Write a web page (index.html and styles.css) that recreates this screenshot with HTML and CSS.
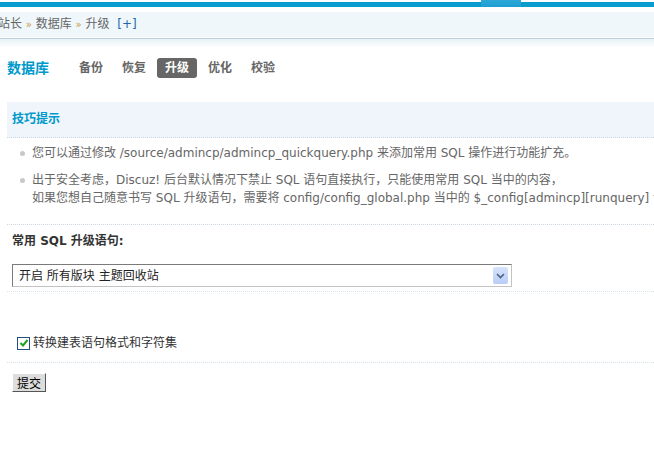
FILE: index.html
```html
<!DOCTYPE html>
<html lang="zh-CN">

<head>
    <meta charset="UTF-8">
    <title>数据库 - 升级</title>
    <link rel="stylesheet" href="styles.css">
</head>

<body>

    <div class="topbar">
        <span class="topbar-tab"></span>
    </div>

    <div class="crumbs">
        站长 <em>&raquo;</em> 数据库 <em>&raquo;</em> 升级 <a href="#" class="crumb-add">[+]</a>
    </div>
    <div class="crumbs-shadow"></div>

    <div class="main">
        <div class="itemtitle">
            <h3>数据库</h3>
            <ul class="tabs">
                <li><a href="#">备份</a></li>
                <li><a href="#">恢复</a></li>
                <li class="current"><a href="#">升级</a></li>
                <li><a href="#">优化</a></li>
                <li><a href="#">校验</a></li>
            </ul>
        </div>

        <div class="tips">
            <div class="tips-head">技巧提示</div>
            <ul class="tips-list">
                <li>您可以通过修改 /source/admincp/admincp_quickquery.php 来添加常用 SQL 操作进行功能扩充。</li>
                <li>出于安全考虑，Discuz! 后台默认情况下禁止 SQL 语句直接执行，只能使用常用 SQL 当中的内容，<br>如果您想自己随意书写 SQL 升级语句，需要将 config/config_global.php 当中的 $_config[admincp][runquery] 设置修改为 1。</li>
            </ul>
        </div>

        <form class="form">
            <div class="row row-label">常用 SQL 升级语句:</div>
            <div class="row row-select">
                <div class="select">
                    <span>开启 所有版块 主题回收站</span>
                    <span class="select-arrow">
                        <svg width="9" height="6" viewBox="0 0 9 6">
                            <path d="M1 1 L4.5 4.5 L8 1" fill="none" stroke="#4d6185" stroke-width="1.6"/>
                        </svg>
                    </span>
                </div>
            </div>
            <div class="row row-check">
                <label class="check">
                    <span class="box">
                        <svg width="10" height="10" viewBox="0 0 10 10">
                            <path d="M1.5 5 L4 7.5 L8.5 2" fill="none" stroke="#21a121" stroke-width="2"/>
                        </svg>
                    </span>
                    转换建表语句格式和字符集
                </label>
            </div>
            <div class="row row-submit">
                <button type="button" class="btn">提交</button>
            </div>
        </form>
    </div>

</body>

</html>
```

FILE: styles.css
```css
body {
    margin: 0;
    background: #fff;
    color: #666;
    font: 12px/18px "DejaVu Sans", "Noto Sans CJK SC", sans-serif;
    overflow: hidden;
}

ul {
    margin: 0;
    padding: 0;
    list-style: none;
}

a {
    text-decoration: none;
}

/* header */
.topbar {
    display: flex;
    height: 5px;
    margin-top: 2px;
    background: #0a9ccf;
}

.topbar-tab {
    width: 40px;
    height: 7px;
    margin-top: -2px;
    margin-left: 481px;
    background: linear-gradient(#2da8d8, #1e9fd2);
}

.crumbs {
    margin-top: 5px;
    margin-left: -2px;
    height: 25px;
    line-height: 25px;
    background: #eff7fb;
    border-bottom: 1px solid #fff;
    color: #666;
    white-space: nowrap;
}

.crumbs em {
    font-style: normal;
    font-size: 10px;
    color: #c89a3a;
}

.crumb-add {
    margin-left: 4px;
    color: #2366a8;
}

.crumbs-shadow {
    height: 9px;
    border-top: 1px solid #bccfd8;
    background: linear-gradient(#e7f1f6, #fff);
}

/* content */
.main {
    padding-left: 7px;
}

.itemtitle {
    display: flex;
    align-items: center;
    height: 20px;
    margin-top: 10px;
}

.itemtitle h3 {
    margin: 0;
    width: 64px;
    font-size: 14px;
    color: #09c;
    font-weight: bold;
}

.tabs {
    display: flex;
}

.tabs li a {
    display: block;
    padding: 0 8px;
    margin-right: 3px;
    height: 20px;
    line-height: 20px;
    border-radius: 3px;
    color: #666;
    font-weight: bold;
}

.tabs li.current a {
    background: #666;
    color: #fff;
}

.tips {
    margin-top: 24px;
}

.tips-head {
    height: 35px;
    line-height: 35px;
    padding-left: 5px;
    background: #eff5fb;
    border-bottom: 1px dotted #ccd6e0;
    color: #09c;
    font-weight: bold;
}

.tips-list {
    padding: 6px 0 8px 25px;
    border-bottom: 1px dotted #ccd6e0;
}

.tips-list li {
    position: relative;
    padding: 0 0 9px;
    white-space: nowrap;
}

.tips-list li::before {
    content: "";
    position: absolute;
    left: -12px;
    top: 7px;
    width: 5px;
    height: 5px;
    border-radius: 50%;
    background: #c8c8c8;
}

.row {
    padding-left: 5px;
}

.row-label {
    padding-top: 7px;
    height: 32px;
    color: #333;
    font-weight: bold;
}

.row-select {
    padding-bottom: 4px;
    border-bottom: 1px dotted #d5e2ec;
}

.select {
    display: flex;
    align-items: center;
    justify-content: space-between;
    box-sizing: border-box;
    width: 500px;
    height: 23px;
    padding: 0 3px 0 6px;
    border: 1px solid #7a7a7a;
    border-right-color: #c3c3c3;
    border-bottom-color: #c3c3c3;
    color: #222;
}

.select-arrow {
    display: flex;
    align-items: center;
    justify-content: center;
    width: 15px;
    height: 17px;
    border-radius: 2px;
    background: linear-gradient(#d6e3fb, #b9cdf6);
}

.row-check {
    padding: 42px 0 10px 10px;
    border-bottom: 1px dotted #d5e2ec;
}

.check {
    display: flex;
    align-items: center;
    gap: 3px;
    color: #333;
}

.box {
    display: flex;
    align-items: center;
    justify-content: center;
    box-sizing: border-box;
    width: 13px;
    height: 13px;
    border: 1px solid #1c5180;
    background: #fff;
}

.row-submit {
    padding-top: 10px;
}

.btn {
    height: 19px;
    padding: 0 4px;
    font: 12px "Noto Sans CJK SC", sans-serif;
    color: #000;
    background: #ddd;
    border: 1px solid;
    border-color: #fff #555 #555 #fff;
    line-height: 15px;
}
```
